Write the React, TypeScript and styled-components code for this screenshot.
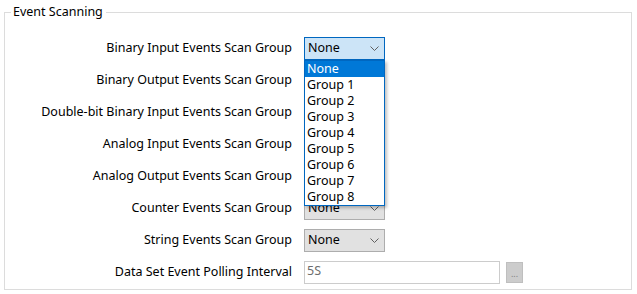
import * as React from "react";
import styled, { createGlobalStyle } from "styled-components";

const GlobalStyle = createGlobalStyle`
  html, body {
    margin: 0;
    padding: 0;
    background: #ffffff;
    font-family: "Segoe UI", "Noto Sans", "Liberation Sans", sans-serif;
    font-size: 12.5px;
    color: #000000;
  }
`;

const Page = styled.div`
  width: 637px;
  height: 294px;
  padding: 4px 5px 0 4px;
  box-sizing: border-box;
`;

const GroupBox = styled.fieldset`
  margin: 0;
  padding: 0 0 2px 0;
  height: 286px;
  box-sizing: border-box;
  border: 1px solid #dcdcdc;
`;

const Legend = styled.legend`
  margin-left: 6px;
  padding: 0 3px 0 2px;
  line-height: 16px;
`;

const Rows = styled.div`
  display: grid;
  grid-template-columns: 287px 1fr;
  grid-auto-rows: 32px;
  column-gap: 12px;
  align-items: center;
  padding-top: 12px;
`;

const Label = styled.div`
  text-align: right;
  white-space: nowrap;
  line-height: 16px;
`;

const Field = styled.div`
  display: flex;
  align-items: center;
  gap: 6px;
  position: relative;
`;

const Combo = styled.div<{ focused?: boolean }>`
  width: 81px;
  height: 23px;
  box-sizing: border-box;
  display: flex;
  align-items: center;
  justify-content: space-between;
  padding: 0 5px 0 3px;
  border: 1px solid ${p => (p.focused ? "#0067c0" : "#adadad")};
  background: ${p => (p.focused ? "#cce4f7" : "#e1e1e1")};
  line-height: 16px;
`;

const Chevron = () => (
  <svg width="9" height="5" viewBox="0 0 9 5">
    <path d="M0.5 0.5 L4.5 4.5 L8.5 0.5" fill="none" stroke="#606060" strokeWidth="1" />
  </svg>
);

const TextBox = styled.div`
  width: 196px;
  height: 23px;
  box-sizing: border-box;
  border: 1px solid #cccccc;
  background: #ffffff;
  color: #6d6d6d;
  padding: 1px 2px;
  line-height: 16px;
`;

const EllipsisButton = styled.div`
  width: 17px;
  height: 21px;
  box-sizing: border-box;
  border: 1px solid #bfbfbf;
  background: #cccccc;
  color: #838383;
  font-size: 9px;
  display: flex;
  align-items: flex-end;
  justify-content: center;
  padding-bottom: 4px;
  line-height: 8px;
`;

const DropList = styled.ul`
  position: absolute;
  top: 23px;
  left: 0;
  z-index: 2;
  width: 81px;
  margin: 0;
  padding: 0;
  list-style: none;
  box-sizing: border-box;
  border: 1px solid #0067c0;
  background: #ffffff;
  box-shadow: 2px 2px 3px rgba(0, 0, 0, 0.25);
`;

const DropItem = styled.li<{ selected?: boolean }>`
  height: 16px;
  line-height: 16px;
  padding-left: 2px;
  background: ${p => (p.selected ? "#0078d7" : "transparent")};
  color: ${p => (p.selected ? "#ffffff" : "#000000")};
`;

const scanGroups = [
  "Binary Input Events Scan Group",
  "Binary Output Events Scan Group",
  "Double-bit Binary Input Events Scan Group",
  "Analog Input Events Scan Group",
  "Analog Output Events Scan Group",
  "Counter Events Scan Group",
  "String Events Scan Group",
];

const options = ["None", "Group 1", "Group 2", "Group 3", "Group 4", "Group 5", "Group 6", "Group 7", "Group 8"];

export default function App() {
  return (
    <Page>
      <GlobalStyle />
      <GroupBox>
        <Legend>Event Scanning</Legend>
        <Rows>
          {scanGroups.map((label, i) => (
            <React.Fragment key={label}>
              <Label>{label}</Label>
              <Field>
                <Combo focused={i === 0}>
                  <span>None</span>
                  <Chevron />
                </Combo>
                {i === 0 && (
                  <DropList>
                    {options.map(o => (
                      <DropItem key={o} selected={o === "None"}>
                        {o}
                      </DropItem>
                    ))}
                  </DropList>
                )}
              </Field>
            </React.Fragment>
          ))}
          <Label>Data Set Event Polling Interval</Label>
          <Field>
            <TextBox>5S</TextBox>
            <EllipsisButton>...</EllipsisButton>
          </Field>
        </Rows>
      </GroupBox>
    </Page>
  );
}
